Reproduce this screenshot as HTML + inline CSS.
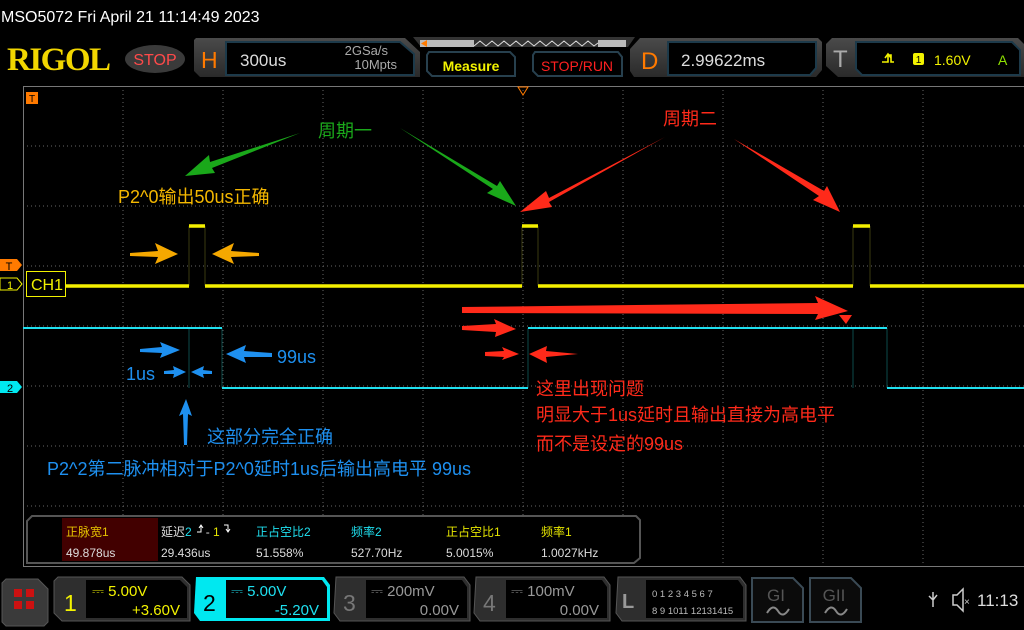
<!DOCTYPE html>
<html><head><meta charset="utf-8"><style>
body{margin:0;width:1024px;height:630px;background:#000;overflow:hidden;position:relative;font-family:"Liberation Sans","Noto Sans CJK SC",sans-serif;}
</style></head><body>
<svg width="1024" height="630" style="position:absolute;left:0;top:0" font-family="Liberation Sans, Noto Sans CJK SC, sans-serif">
<defs>
<linearGradient id="pb" x1="0" y1="0" x2="0" y2="1"><stop offset="0" stop-color="#4a4a4a"/><stop offset="1" stop-color="#2a2a2a"/></linearGradient>
</defs>
<text x="1" y="22" fill="#fff" font-size="16">MSO5072  Fri April 21 11:14:49 2023</text>
<text x="7" y="70" fill="#f2d600" font-size="33" font-weight="bold" font-family="Liberation Serif, serif" letter-spacing="-1.5">RIGOL</text>
<ellipse cx="155" cy="59" rx="30" ry="14" fill="#3a3a3a"/>
<text x="155" y="65" fill="#ff4a4a" font-size="16" text-anchor="middle">STOP</text>
<path d="M196 38 H405 L420 52 V77 H200 L194 71 V40Z" fill="url(#pb)"/>
<text x="201" y="68" fill="#ff7a00" font-size="23">H</text>
<path d="M226 42 H400 L414 54 V75 H226Z" fill="#000" stroke="#1d3a4a" stroke-width="2"/>
<text x="240" y="66" fill="#ddd" font-size="17">300us</text>
<text x="388" y="55" fill="#aaa" font-size="13" text-anchor="end">2GSa/s</text>
<text x="397" y="69" fill="#aaa" font-size="13" text-anchor="end">10Mpts</text>
<path d="M413 37 H635 L628 47 H421Z" fill="#333"/>
<rect x="420" y="40" width="54" height="7" fill="#bbb"/>
<rect x="598" y="40" width="28" height="7" fill="#bbb"/>
<polyline points="474,46 480,41 486,46 492,41 498,46 504,41 510,46 516,41 522,46 528,41 534,46 540,41 546,46 552,41 558,46 564,41 570,46 576,41 582,46 588,41 594,46 598,43" fill="none" stroke="#ddd" stroke-width="1"/>
<path d="M427 40 L421 43.5 L427 47Z" fill="#ff7a00"/>
<path d="M429 52 H510 L515 57 V76 H432 L427 71 V55Z" fill="#000" stroke="#27404e" stroke-width="2"/>
<text x="471" y="71" fill="#f2f200" font-size="14" font-weight="bold" text-anchor="middle">Measure</text>
<path d="M535 52 H618 L622 57 V76 H538 L533 71 V55Z" fill="#000" stroke="#27404e" stroke-width="2"/>
<text x="577" y="71" fill="#ff2020" font-size="14" text-anchor="middle">STOP/RUN</text>
<path d="M640 38 H818 L822 42 V70 L816 77 H634 L630 71 V49Z" fill="url(#pb)"/>
<text x="641" y="69" fill="#ff7a00" font-size="24">D</text>
<path d="M668 42 H816 V68 L810 75 H668Z" fill="#000" stroke="#1d3a4a" stroke-width="2"/>
<text x="681" y="66" fill="#ddd" font-size="17">2.99622ms</text>
<path d="M832 38 H1018 L1024 44 V77 H838 L826 66 V44Z" fill="url(#pb)"/>
<text x="833" y="67" fill="#aaa" font-size="24">T</text>
<path d="M856 42 H1012 L1020 50 V75 H862 L856 69Z" fill="#000" stroke="#1d3a4a" stroke-width="2"/>
<path d="M882 62 H888 V55 H891 V62 H894 M885 58 L888 54 L891 58" fill="none" stroke="#f2f200" stroke-width="1.6"/>
<rect x="913" y="53" width="11" height="12" rx="2" fill="#f2f200"/>
<text x="918.5" y="63" fill="#000" font-size="10" text-anchor="middle">1</text>
<text x="934" y="65" fill="#f2f200" font-size="14">1.60V</text>
<text x="998" y="65" fill="#8ee000" font-size="14">A</text>
<g stroke="#666" stroke-width="1" stroke-dasharray="1,3">
<line x1="123" y1="86" x2="123" y2="566"/><line x1="223" y1="86" x2="223" y2="566"/><line x1="323" y1="86" x2="323" y2="566"/><line x1="423" y1="86" x2="423" y2="566"/><line x1="523" y1="86" x2="523" y2="566"/><line x1="623" y1="86" x2="623" y2="566"/><line x1="723" y1="86" x2="723" y2="566"/><line x1="823" y1="86" x2="823" y2="566"/><line x1="923" y1="86" x2="923" y2="566"/>
<line x1="23" y1="146" x2="1024" y2="146"/><line x1="23" y1="206" x2="1024" y2="206"/><line x1="23" y1="266" x2="1024" y2="266"/><line x1="23" y1="326" x2="1024" y2="326"/><line x1="23" y1="386" x2="1024" y2="386"/><line x1="23" y1="446" x2="1024" y2="446"/><line x1="23" y1="506" x2="1024" y2="506"/>
</g>
<g stroke="#777" stroke-width="1">
<line x1="23.5" y1="86" x2="23.5" y2="566"/><line x1="23" y1="86.5" x2="1024" y2="86.5"/><line x1="23" y1="566.5" x2="1024" y2="566.5"/>
</g>
<path d="M518 87 H528 L523 95Z" fill="none" stroke="#ff7a00"/>
<rect x="26" y="92" width="12" height="12" fill="#ff7a00"/><text x="32" y="102" font-size="10" fill="#000" text-anchor="middle">T</text>
<path d="M0 259 H17 L22 265 L17 271 H0Z" fill="#ff7a00"/><text x="9" y="270" font-size="11" fill="#000" text-anchor="middle">T</text>
<path d="M0 278 H17 L22 284 L17 290 H0Z" fill="#000" stroke="#f2f200"/><text x="10" y="289" font-size="11" fill="#f2f200" text-anchor="middle">1</text>
<path d="M0 381 H17 L22 387 L17 393 H0Z" fill="#00e8f0"/><text x="10" y="392" font-size="11" fill="#000" text-anchor="middle">2</text>
<!-- traces: faint edges -->
<g stroke="#3a3a10" stroke-width="1">
<line x1="189" y1="226" x2="189" y2="286"/><line x1="205" y1="226" x2="205" y2="286"/>
<line x1="522" y1="226" x2="522" y2="286"/><line x1="538" y1="226" x2="538" y2="286"/>
<line x1="853" y1="226" x2="853" y2="286"/><line x1="870" y1="226" x2="870" y2="286"/>
</g>
<g stroke="#0c4a4a" stroke-width="1">
<line x1="189" y1="328" x2="189" y2="388"/><line x1="222" y1="328" x2="222" y2="388"/>
<line x1="528" y1="328" x2="528" y2="388"/><line x1="853" y1="328" x2="853" y2="388"/><line x1="887" y1="328" x2="887" y2="388"/>
</g>
<g stroke="#f5f000" stroke-width="3.5">
<line x1="66" y1="286" x2="189" y2="286"/><line x1="205" y1="286" x2="522" y2="286"/><line x1="538" y1="286" x2="853" y2="286"/><line x1="870" y1="286" x2="1024" y2="286"/>
<line x1="189" y1="226" x2="205" y2="226"/><line x1="522" y1="226" x2="538" y2="226"/><line x1="853" y1="226" x2="870" y2="226"/>
</g>
<g stroke="#1fe0f0" stroke-width="2">
<line x1="23" y1="328" x2="222" y2="328"/><line x1="222" y1="388" x2="528" y2="388"/><line x1="528" y1="328" x2="887" y2="328"/><line x1="887" y1="388" x2="1024" y2="388"/>
</g>
<rect x="26.5" y="271.5" width="39" height="25" fill="#000" stroke="#f2f200"/>
<text x="31" y="290" fill="#f2f200" font-size="16">CH1</text>
<g fill="#1aa81a">
<path d="M300 133 L210 162 L209 155 L185 176 L215 173 L212 168 Z"/>
<path d="M400 128 L493 189 L487 193 L516 206 L500 181 L497 186 Z"/>
</g>
<g fill="#ff2a1a">
<path d="M665 137 L549 198 L546 191 L520 212 L552 207 L549 202 Z"/>
<path d="M734 139 L819 196 L813 200 L840 212 L827 186 L824 191 Z"/>
<path d="M462 307 L818 303 L815 296 L848 311 L815 320 L818 314 L462 313Z"/>
<path d="M839 315 L852 315 L846 324Z"/>
<path d="M462 326 L496 324 L494 319 L516 329 L495 337 L496 332 L462 330Z"/>
<path d="M485 352 L504 351 L502 347 L519 354 L502 360 L504 357 L485 356Z"/>
<path d="M578 354 L546 351 L547 346 L529 354 L547 363 L546 357Z"/>
</g>
<g fill="#f5a800">
<path d="M130 253 L158 251 L155 243 L178 254 L155 264 L158 257 L130 256Z"/>
<path d="M259 253 L231 251 L234 243 L212 254 L234 264 L231 257 L259 256Z"/>
</g>
<g fill="#1e90f0">
<path d="M140 349 L162 347 L160 342 L180 350 L160 358 L162 353 L140 352Z"/>
<path d="M272 353 L244 351 L246 345 L226 354 L246 363 L244 357 L272 357Z"/>
<path d="M164 371 L174 370 L173 366 L186 372 L173 378 L174 374 L164 374Z"/>
<path d="M212 371 L203 370 L204 366 L191 372 L204 378 L203 374 L212 374Z"/>
<path d="M184 445 L183 414 L179 416 L186 399 L192 416 L188 414 L187 445Z"/>
</g>
<text x="318" y="137" fill="#1aa81a" font-size="18">周期一</text>
<text x="663" y="125" fill="#ff2a1a" font-size="18">周期二</text>
<text x="118" y="203" fill="#f5b800" font-size="18">P2^0输出50us正确</text>
<text x="277" y="363" fill="#1e90f0" font-size="18">99us</text>
<text x="126" y="380" fill="#1e90f0" font-size="18">1us</text>
<text x="207" y="443" fill="#1e90f0" font-size="18">这部分完全正确</text>
<text x="47" y="475" fill="#1e90f0" font-size="18">P2^2第二脉冲相对于P2^0延时1us后输出高电平 99us</text>
<text x="536" y="395" fill="#ff2a1a" font-size="18">这里出现问题</text>
<text x="536" y="421" fill="#ff2a1a" font-size="18">明显大于1us延时且输出直接为高电平</text>
<text x="536" y="450" fill="#ff2a1a" font-size="18">而不是设定的99us</text>
<path d="M32 516 H636 L640 520 V558 L634 563 H27 V521Z" fill="#000" stroke="#555" stroke-width="2"/>
<rect x="62" y="518" width="96" height="43" fill="#420000"/>
<g font-size="12">
<text x="66" y="536" fill="#e6c200">正脉宽1</text><text x="66" y="557" fill="#ddd">49.878us</text>
<text x="161" y="536" fill="#ddd">延迟<tspan fill="#1fe0f0">2</tspan><tspan dx="14">- </tspan><tspan fill="#e6e600">1</tspan></text><text x="161" y="557" fill="#ddd">29.436us</text>
<text x="256" y="536" fill="#1fe0f0">正占空比2</text><text x="256" y="557" fill="#ddd">51.558%</text>
<text x="351" y="536" fill="#1fe0f0">频率2</text><text x="351" y="557" fill="#ddd">527.70Hz</text>
<text x="446" y="536" fill="#e6e600">正占空比1</text><text x="446" y="557" fill="#ddd">5.0015%</text>
<text x="541" y="536" fill="#e6e600">频率1</text><text x="541" y="557" fill="#ddd">1.0027kHz</text>
</g>
<path d="M197 532 H201 V525 M199 528 L201 525 L203 528 M224 525 H228 V532 M226 529 L228 532 L230 529" stroke="#fff" fill="none"/>
<path d="M6 579 H38 L48 589 V622 L44 626 H6 L2 622 V583Z" fill="#3a3a3a" stroke="#555"/>
<g fill="#cc1111"><rect x="14" y="589" width="8" height="8"/><rect x="26" y="589" width="8" height="8"/><rect x="14" y="601" width="8" height="8"/><rect x="26" y="601" width="8" height="8"/></g>
<path d="M58 577 H182 L190 585 V621 H62 L54 613 V581Z" fill="#2e2e2e" stroke="#555"/>
<path d="M86 580 H180 L187 587 V618 H86Z" fill="#000"/>
<text x="64" y="611" fill="#f2f200" font-size="23">1</text>
<text x="92" y="596" fill="#f2f200" font-size="15">⎓ 5.00V</text><text x="180" y="615" fill="#f2f200" font-size="15" text-anchor="end">+3.60V</text>
<path d="M196 577 H324 L330 585 V621 H200 L194 613Z" fill="#00e8f0"/>
<path d="M226 580 H322 L327 587 V618 H226Z" fill="#000"/>
<text x="203" y="611" fill="#000" font-size="23">2</text>
<text x="231" y="596" fill="#1fe0f0" font-size="15">⎓ 5.00V</text><text x="319" y="615" fill="#1fe0f0" font-size="15" text-anchor="end">-5.20V</text>
<path d="M336 577 H464 L470 585 V621 H340 L334 613Z" fill="#2e2e2e" stroke="#555"/>
<path d="M366 580 H462 L467 587 V618 H366Z" fill="#000"/>
<text x="343" y="611" fill="#777" font-size="23">3</text>
<text x="371" y="596" fill="#999" font-size="15">⎓ 200mV</text><text x="459" y="615" fill="#999" font-size="15" text-anchor="end">0.00V</text>
<path d="M476 577 H604 L610 585 V621 H480 L474 613Z" fill="#2e2e2e" stroke="#555"/>
<path d="M506 580 H602 L607 587 V618 H506Z" fill="#000"/>
<text x="483" y="611" fill="#777" font-size="23">4</text>
<text x="511" y="596" fill="#999" font-size="15">⎓ 100mV</text><text x="599" y="615" fill="#999" font-size="15" text-anchor="end">0.00V</text>
<path d="M618 577 H740 L746 585 V621 H622 L616 613Z" fill="#2e2e2e" stroke="#555"/>
<path d="M646 580 H738 L743 587 V618 H646Z" fill="#000"/>
<text x="622" y="608" fill="#999" font-size="20" font-weight="bold">L</text>
<text x="652" y="597" fill="#bbb" font-size="9.5">0 1 2 3  4 5 6 7</text>
<text x="652" y="614" fill="#bbb" font-size="9.5">8 9 1011 12131415</text>
<path d="M752 578 H793 L803 588 V622 H752Z" fill="#0b0b0b" stroke="#3a4a55" stroke-width="2"/>
<text x="776" y="601" fill="#555" font-size="17" text-anchor="middle">GI</text>
<path d="M767 613 Q773 603 778 611 Q783 619 789 609" stroke="#888" fill="none" stroke-width="2"/>
<path d="M810 578 H851 L861 588 V622 H810Z" fill="#0b0b0b" stroke="#3a4a55" stroke-width="2"/>
<text x="834" y="601" fill="#555" font-size="17" text-anchor="middle">GII</text>
<path d="M825 613 Q831 603 836 611 Q841 619 847 609" stroke="#888" fill="none" stroke-width="2"/>
<path d="M933 592 V607 M929 596 L933 600 L937 595" stroke="#ccc" fill="none" stroke-width="1.5"/>
<path d="M953 595 H957 L963 589 V611 L957 605 H953Z" fill="none" stroke="#ccc" stroke-width="1.5"/>
<text x="964" y="605" fill="#ccc" font-size="10">×</text>
<text x="977" y="606" fill="#ddd" font-size="17">11:13</text>
</svg>
</body></html>
